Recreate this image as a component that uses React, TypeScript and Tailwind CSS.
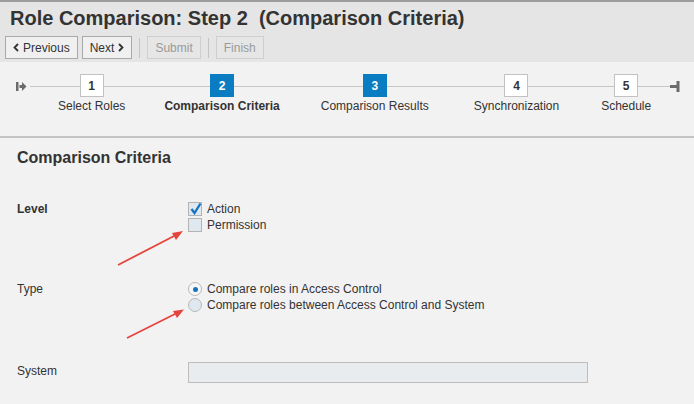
import React from "react";

const STEPS = [
  { n: 1, label: "Select Roles", done: false, current: false, gap: "ml-[58px]" },
  { n: 2, label: "Comparison Criteria", done: true, current: true, gap: "ml-[39px]" },
  { n: 3, label: "Comparison Results", done: true, current: false, gap: "ml-[41px]" },
  { n: 4, label: "Synchronization", done: false, current: false, gap: "ml-[45px]" },
  { n: 5, label: "Schedule", done: false, current: false, gap: "ml-[42px]" },
];

function ToolButton({ children, disabled }: { children: React.ReactNode; disabled?: boolean }) {
  return (
    <button
      className={`h-[23px] px-[7px] flex items-center text-[12px] leading-none border ${
        disabled
          ? "border-[#cfcfcf] bg-[#e6e6e6] text-[#9a9a9a]"
          : "border-[#a9a9a9] bg-[#f0f0f0] text-[#333]"
      }`}
    >
      {children}
    </button>
  );
}

function Chevron({ left }: { left?: boolean }) {
  return (
    <svg width="6" height="9" viewBox="0 0 6 9" className={left ? "mr-[4px]" : "ml-[4px]"}>
      <path
        d={left ? "M5 1 L1.5 4.5 L5 8" : "M1 1 L4.5 4.5 L1 8"}
        fill="none"
        stroke="#333"
        strokeWidth="1.8"
      />
    </svg>
  );
}

function Checkbox({ checked }: { checked?: boolean }) {
  return (
    <span className="relative w-[14px] h-[14px] border border-[#b3b3b3] bg-[#dfe7ef] shrink-0">
      {checked && (
        <svg className="absolute left-[1px] top-[-1px]" width="12" height="13" viewBox="0 0 12 13">
          <path d="M1.5 7 L4.5 11 L10.5 1.5" fill="none" stroke="#1474c4" strokeWidth="2.3" />
        </svg>
      )}
    </span>
  );
}

function Radio({ checked }: { checked?: boolean }) {
  return (
    <span
      className={`w-[14px] h-[14px] rounded-full border border-[#b8b8b8] flex items-center justify-center shrink-0 ${
        checked ? "bg-[#f7f7f7]" : "bg-[#dfe7ef]"
      }`}
    >
      {checked && <span className="w-[5px] h-[5px] rounded-full bg-[#1474c4]" />}
    </span>
  );
}

export default function App() {
  return (
    <div className="relative w-[694px] h-[404px] overflow-hidden bg-[#f2f2f2] text-[#333] font-['Liberation_Sans',Arial,sans-serif]">
      {/* Header */}
      <header className="h-[62px] bg-[#e5e5e5] border-t-2 border-[#9c9c9c]">
        <h1 className="pl-[10px] pt-[4px] text-[20px] leading-[24px] font-bold text-[#333]">
          Role Comparison: Step 2&nbsp; (Comparison Criteria)
        </h1>
        <div className="flex items-center pl-[5px] mt-[6px] gap-[4px]">
          <ToolButton>
            <Chevron left />
            Previous
          </ToolButton>
          <ToolButton>
            Next
            <Chevron />
          </ToolButton>
          <span className="w-px h-[20px] bg-[#c4c4c4] mx-[3px]" />
          <ToolButton disabled>Submit</ToolButton>
          <span className="w-px h-[20px] bg-[#c4c4c4] mx-[3px]" />
          <ToolButton disabled>Finish</ToolButton>
        </div>
      </header>

      {/* Roadmap */}
      <div className="relative h-[76px] border-b-2 border-[#c4c4c4]">
        <div className="absolute top-[24px] left-[30px] right-[16px] h-px bg-[#c6c6c6]" />
        <svg className="absolute left-[16px] top-[20px]" width="11" height="9" viewBox="0 0 11 9">
          <rect x="0" y="0" width="2.5" height="9" fill="#6b6b6b" />
          <rect x="3.5" y="3" width="3" height="3" fill="#6b6b6b" />
          <path d="M6 0 L10.5 4.5 L6 9 Z" fill="#6b6b6b" />
        </svg>
        <svg className="absolute right-[14px] top-[19px]" width="10" height="11" viewBox="0 0 10 11">
          <rect x="0" y="4" width="7" height="3" fill="#6b6b6b" />
          <rect x="6.5" y="0" width="3" height="11" fill="#6b6b6b" />
        </svg>
        <div className="relative flex">
          {STEPS.map((s) => (
            <div key={s.n} className={`flex flex-col items-center ${s.gap}`}>
              <div
                className={`mt-[12px] w-[24px] h-[23px] flex items-center justify-center text-[12px] font-bold border ${
                  s.done
                    ? "bg-[#0a7cc1] border-[#0a7cc1] text-white"
                    : "bg-white border-[#c2c2c2] text-[#333]"
                }`}
              >
                {s.n}
              </div>
              <div className={`mt-[1px] text-[12px] leading-[16px] ${s.current ? "font-bold" : ""}`}>
                {s.label}
              </div>
            </div>
          ))}
        </div>
      </div>

      {/* Content */}
      <div className="pl-[17px]">
        <h2 className="mt-[10px] text-[16px] leading-[20px] font-bold">Comparison Criteria</h2>

        <div className="flex mt-[33px]">
          <div className="w-[171px] text-[12px] leading-[16px] font-bold">Level</div>
          <div className="flex flex-col">
            <label className="flex items-center h-[16px] gap-[5px] text-[12px]">
              <Checkbox checked />
              Action
            </label>
            <label className="flex items-center h-[16px] gap-[5px] text-[12px]">
              <Checkbox />
              Permission
            </label>
          </div>
        </div>

        <div className="flex mt-[48px]">
          <div className="w-[171px] text-[12px] leading-[16px]">Type</div>
          <div className="flex flex-col">
            <label className="flex items-center h-[16px] gap-[5px] text-[12px]">
              <Radio checked />
              Compare roles in Access Control
            </label>
            <label className="flex items-center h-[16px] gap-[5px] text-[12px]">
              <Radio />
              Compare roles between Access Control and System
            </label>
          </div>
        </div>

        <div className="flex items-start mt-[49px]">
          <div className="w-[171px] pt-[1px] text-[12px] leading-[16px]">System</div>
          <div className="w-[400px] h-[21px] border border-[#bdbdbd] bg-[#e9ecef]" />
        </div>
      </div>

      {/* Annotation arrows */}
      <svg className="absolute inset-0 pointer-events-none" width="694" height="404">
        <g stroke="#e5443c" strokeWidth="1.8" fill="#e5443c">
          <line x1="118" y1="265" x2="176" y2="235" />
          <path d="M183 231 L172 233 L176 240 Z" stroke="none" />
          <line x1="127" y1="338" x2="177" y2="313" />
          <path d="M184 309.5 L173 311 L177 318 Z" stroke="none" />
        </g>
      </svg>
    </div>
  );
}
